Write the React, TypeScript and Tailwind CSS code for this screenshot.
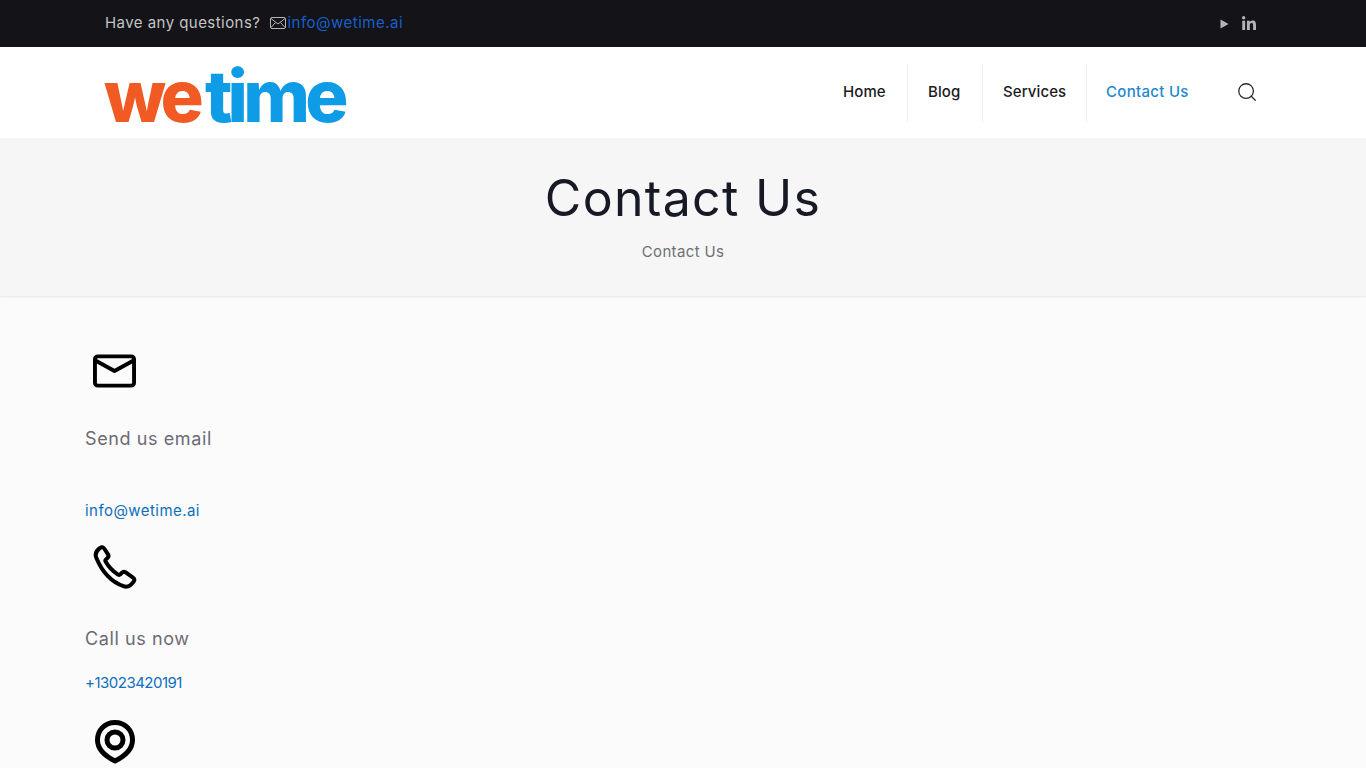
import { Search } from "lucide-react";
import { FaLinkedinIn } from "react-icons/fa";

const nav = [
  { label: "Home", cls: "w-[65px] pr-5 text-[#1b1b22] border-r border-[#eeeeee]" },
  { label: "Blog", cls: "w-[75px] pl-5 text-[#1b1b22] border-r border-[#eeeeee]" },
  { label: "Services", cls: "w-[104px] pl-5 text-[#1b1b22] border-r border-[#eeeeee]" },
  { label: "Contact Us", cls: "w-[104px] pl-[19px] text-[#1e88d0] tracking-[0.3px]" },
];

function MailIcon() {
  return (
    <svg width="43" height="34" viewBox="0 0 44 34" fill="none" stroke="#000" strokeWidth="4" strokeLinejoin="round" strokeLinecap="round">
      <rect x="2" y="2" width="40" height="30" rx="3" />
      <path d="M3 6.5 L22 17 L41 6.5" />
    </svg>
  );
}

function PhoneIcon() {
  return (
    <svg width="44" height="44" viewBox="0 0 44 44" fill="none" stroke="#000" strokeWidth="4" strokeLinejoin="round">
      <path d="M3.4 13 C1.8 9.4 2.8 6 7 3 C8.6 1.8 10.2 2 11.2 3.5 L15 9.4 C15.8 10.6 15.6 11.8 14.6 12.8 L12.8 14.6 C12.2 15.2 12.2 16 12.7 16.8 C15.6 21.8 20 26.4 25 29.6 C25.9 30.1 26.7 30 27.3 29.4 L29 27.6 C30 26.6 31.2 26.5 32.4 27.2 L40 32.6 C41.6 33.7 41.8 35.2 40.7 36.6 C37.8 40.6 34.4 42.6 30.5 41.2 C18.7 37 9 26.6 3.4 13 Z" />
    </svg>
  );
}

function PinIcon() {
  return (
    <svg width="40" height="44" viewBox="0 0 40 44" fill="none" stroke="#000" strokeWidth="5" strokeLinejoin="round">
      <path d="M20 2.5 C10 2.5 2.5 10 2.5 20 C2.5 28.5 10 36 20 41 C30 36 37.5 28.5 37.5 20 C37.5 10 30 2.5 20 2.5 Z" />
      <circle cx="20" cy="20" r="8" />
    </svg>
  );
}

function Block({ icon, title, value, titleCls, valueCls }: { icon: React.ReactNode; title: string; value: string; titleCls: string; valueCls: string }) {
  return (
    <div className="flex flex-col">
      <div className="h-[44px] pl-[8px] flex items-center">{icon}</div>
      <h3 className={`text-[18px] leading-[27px] font-normal tracking-[0.6px] text-[#6b6b74] ${titleCls}`}>{title}</h3>
      <a className={`text-[15px] leading-[24px] text-[#0d6ebd] ${valueCls}`}>{value}</a>
    </div>
  );
}

export default function App() {
  return (
    <div className="h-screen overflow-hidden bg-[#fbfbfc] font-['Inter','Liberation_Sans',sans-serif]">
      <div className="h-[47px] bg-[#131318] pl-[105px] pr-[109px] flex items-center justify-between">
        <div className="flex items-center text-[15px]">
          <span className="text-[#c4c4c6] tracking-[0.45px]">Have any questions?</span>
          <svg className="ml-[10px] -mt-[1px]" width="16" height="12" viewBox="0 0 16 12" fill="none" stroke="#b5b5b8" strokeWidth="1">
            <rect x="0.5" y="0.5" width="15" height="11" rx="1.5" />
            <path d="M1 1.5 L8 7 L15 1.5 M1 10.5 L5.5 5.5 M15 10.5 L10.5 5.5" />
          </svg>
          <a className="ml-[1px] text-[#1760cc] tracking-[0.5px]">info@wetime.ai</a>
        </div>
        <div className="flex items-center gap-[12px] text-[#b4b4b7]">
          <svg width="9" height="10" viewBox="0 0 9 10" fill="#b4b4b7"><path d="M0.5 0.5 L8.5 5 L0.5 9.5 Z" /></svg>
          <FaLinkedinIn size={16} />
        </div>
      </div>

      <header className="h-[91px] bg-white pl-[104px] pr-[108px] flex items-center justify-between">
        <div className="flex items-baseline h-[91px] pt-[5px] leading-[88px] text-[72px] font-extrabold select-none">
          <span className="text-[#f15a22] tracking-[-4.8px]">we</span>
          <span className="ml-[6px] text-[#0f9ce6] tracking-[-4.8px]">time</span>
        </div>
        <div className="flex items-center">
          <nav className="flex items-center text-[15px] font-medium tracking-[0.1px]">
            {nav.map((n) => (
              <a key={n.label} className={`h-[58px] flex items-center whitespace-nowrap ${n.cls}`}>
                {n.label}
              </a>
            ))}
          </nav>
          <Search className="ml-[45px] -mt-[1px] text-[#2a2a30]" size={22} strokeWidth={1.4} />
        </div>
      </header>

      <section className="h-[159px] bg-[#f6f6f7] border-b border-[#eeeeef] shadow-[0_1px_2px_rgba(0,0,0,0.04)] flex flex-col items-center">
        <h1 className="mt-[28px] text-[50px] leading-[65px] font-normal tracking-[1.3px] text-[#171a25]">Contact Us</h1>
        <p className="mt-[9px] text-[15px] leading-[24px] tracking-[0.35px] text-[#6f6f74]">Contact Us</p>
      </section>

      <main className="pl-[85px] pt-[52px] flex flex-col">
        <Block icon={<MailIcon />} title="Send us email" value="info@wetime.ai" titleCls="mt-[32px] mb-[47px]" valueCls="tracking-[0.45px]" />
        <div className="h-[22px]" />
        <Block icon={<PhoneIcon />} title="Call us now" value="+13023420191" titleCls="mt-[36px] mb-[19px]" valueCls="tracking-[-0.5px]" />
        <div className="h-[25px]" />
        <div className="h-[44px] pl-[10px] flex items-center"><PinIcon /></div>
      </main>
    </div>
  );
}
